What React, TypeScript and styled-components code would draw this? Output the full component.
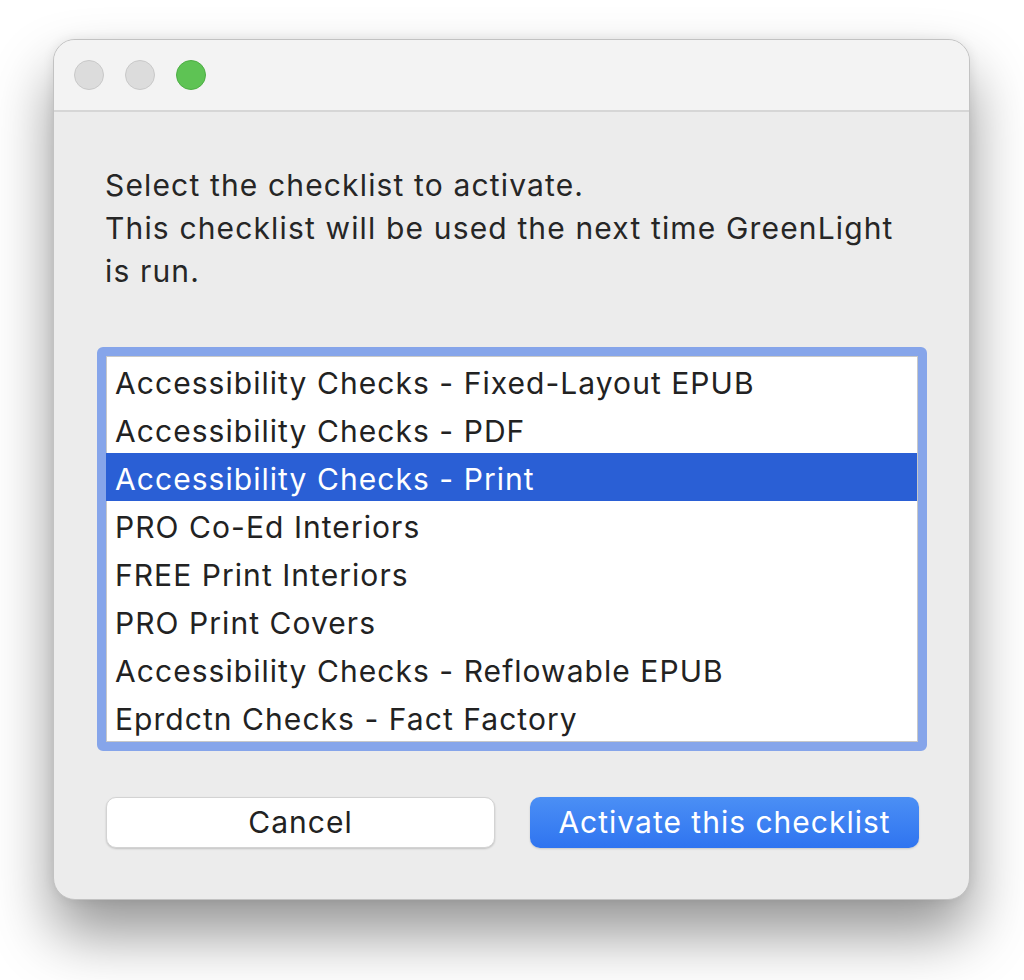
import React, { useState } from "react";
import styled, { createGlobalStyle } from "styled-components";

const Global = createGlobalStyle`
  html, body { margin: 0; padding: 0; background: #ffffff; }
  body { font-family: Inter, "Noto Sans", "Liberation Sans", sans-serif; -webkit-font-smoothing: antialiased; }
`;

const Page = styled.div`
  width: 1024px;
  height: 980px;
  padding: 39px 0 0 53px;
  box-sizing: border-box;
  overflow: hidden;
`;

const Window = styled.div`
  width: 917px;
  height: 861px;
  box-sizing: border-box;
  border-radius: 22px;
  background: #ececec;
  border: 1px solid #c2c2c2;
  box-shadow: 0 34px 60px rgba(0, 0, 0, 0.42), 0 0 12px rgba(0, 0, 0, 0.08);
  overflow: hidden;
  display: flex;
  flex-direction: column;
`;

const TitleBar = styled.div`
  height: 70px;
  flex: none;
  background: #f3f3f3;
  border-bottom: 2px solid #d6d6d6;
  display: flex;
  align-items: center;
  gap: 21px;
  padding-left: 20px;
`;

const Light = styled.span<{ $c: string; $b: string }>`
  width: 30px;
  height: 30px;
  border-radius: 50%;
  box-sizing: border-box;
  background: ${(p) => p.$c};
  border: 1.5px solid ${(p) => p.$b};
`;

const Body = styled.div`
  display: flex;
  flex-direction: column;
  padding: 52px 0 0 43px;
`;

const Message = styled.p`
  margin: 0 0 54px 8px;
  font-size: 30px;
  letter-spacing: 1.15px;
  line-height: 43px;
  color: #262626;
  width: 800px;
`;

const ListBox = styled.div`
  width: 830px;
  height: 404px;
  box-sizing: border-box;
  border: 9px solid #86a5ea;
  border-radius: 6px;
  background: #ffffff;
  padding: 0;
  display: flex;
  flex-direction: column;
  box-shadow: inset 0 0 0 1px #c8c8c8;
`;

const Row = styled.div<{ $sel?: boolean }>`
  height: 48px;
  flex: none;
  display: flex;
  align-items: center;
  padding-left: 9px;
  padding-top: 3px;
  box-sizing: border-box;
  font-size: 30px;
  letter-spacing: 1.05px;
  color: ${(p) => (p.$sel ? "#ffffff" : "#222222")};
  background: ${(p) => (p.$sel ? "#2a5fd5" : "transparent")};
  margin-right: 1px;
  &:first-child { margin-top: 1px; }
`;

const Buttons = styled.div`
  display: flex;
  gap: 35px;
  margin: 46px 0 0 9px;
`;

const Button = styled.button<{ $primary?: boolean }>`
  width: 389px;
  height: 51px;
  border-radius: 10px;
  font-family: inherit;
  font-size: 30px;
  letter-spacing: 1px;
  padding: 0 0 2px;
  cursor: pointer;
  border: ${(p) => (p.$primary ? "none" : "1px solid #d3d3d3")};
  color: ${(p) => (p.$primary ? "#ffffff" : "#222222")};
  background: ${(p) =>
    p.$primary ? "linear-gradient(#4b8ff5, #2f74f0)" : "#ffffff"};
  box-shadow: ${(p) =>
    p.$primary
      ? "0 1px 2px rgba(0,0,0,0.15)"
      : "0 1px 2px rgba(0,0,0,0.18)"};
`;

const items = [
  "Accessibility Checks - Fixed-Layout EPUB",
  "Accessibility Checks - PDF",
  "Accessibility Checks - Print",
  "PRO Co-Ed Interiors",
  "FREE Print Interiors",
  "PRO Print Covers",
  "Accessibility Checks - Reflowable EPUB",
  "Eprdctn Checks - Fact Factory",
];

export default function App() {
  const [sel, setSel] = useState(2);
  return (
    <Page>
      <Global />
      <Window>
        <TitleBar>
          <Light $c="#dcdcdc" $b="#c8c8c8" />
          <Light $c="#dcdcdc" $b="#c8c8c8" />
          <Light $c="#5ec354" $b="#4eae45" />
        </TitleBar>
        <Body>
          <Message>
            Select the checklist to activate.
            <br />
            This checklist will be used the next time GreenLight is run.
          </Message>
          <ListBox>
            {items.map((t, i) => (
              <Row key={t} $sel={i === sel} onClick={() => setSel(i)}>
                {t}
              </Row>
            ))}
          </ListBox>
          <Buttons>
            <Button>Cancel</Button>
            <Button $primary>Activate this checklist</Button>
          </Buttons>
        </Body>
      </Window>
    </Page>
  );
}
